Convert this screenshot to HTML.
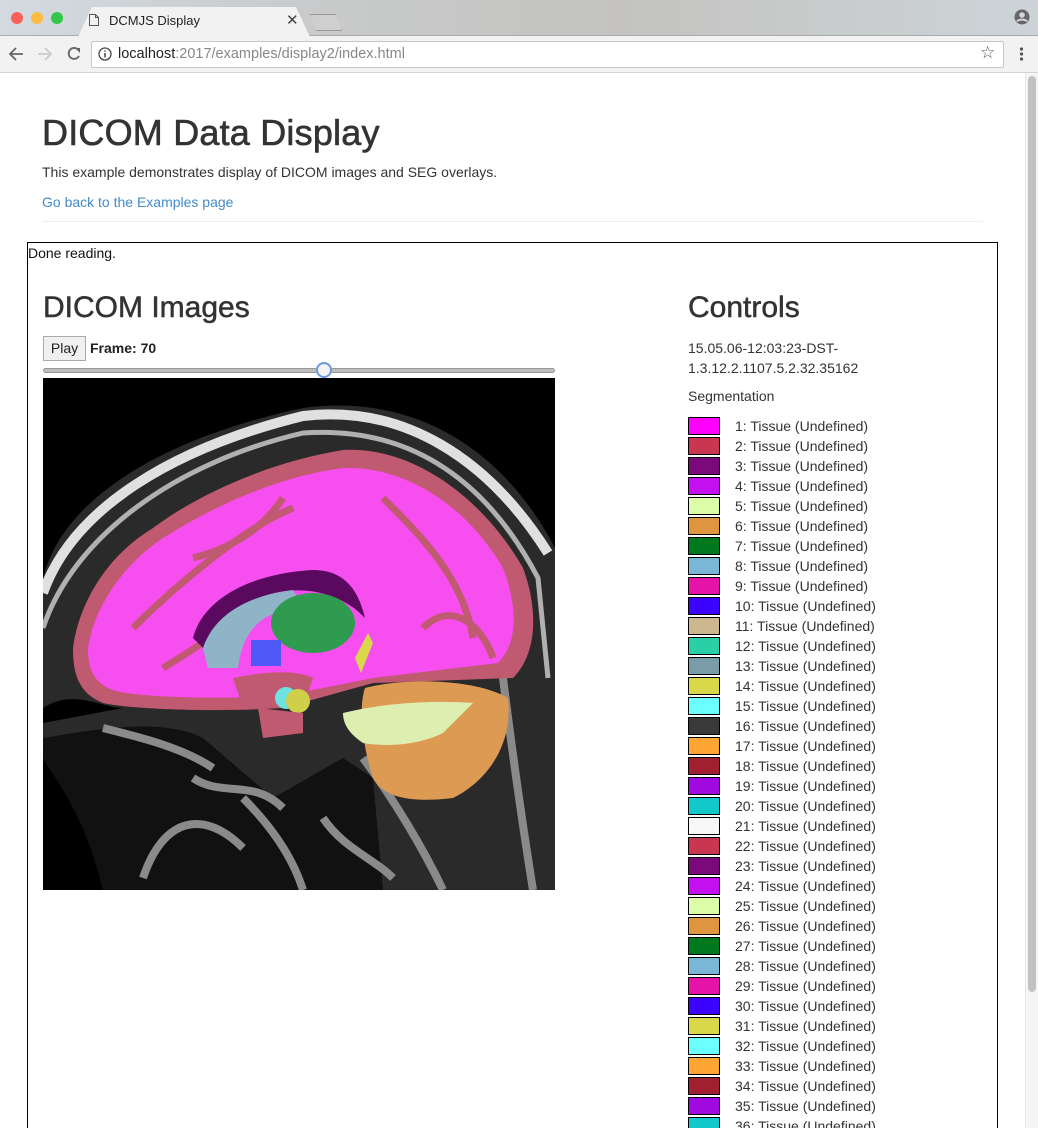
<!DOCTYPE html>
<html><head><meta charset="utf-8"><style>
*{margin:0;padding:0;box-sizing:border-box}
html,body{width:1038px;height:1128px;overflow:hidden}
body{background:#fff;font-family:"Liberation Sans",Arial,sans-serif;color:#333;position:relative}
.abs{position:absolute}
.tabbar{left:0;top:0;width:1038px;height:36px;background:linear-gradient(90deg,#d3dbe0,#c8cacb 30%,#c4c3c0 60%,#cdd4d8);border-bottom:1px solid #a9abad}
.toolbar{left:0;top:36px;width:1038px;height:37px;background:#f2f2f2;border-bottom:1px solid #d4d4d4}
.dot{width:12px;height:12px;border-radius:50%;top:12px}
.tab{left:78px;top:7px;width:232px;height:30px;background:#f2f2f2;clip-path:polygon(0 100%,14px 0,218px 0,232px 100%)}
.url{left:91px;top:41px;width:913px;height:27px;background:#fff;border:1px solid #c7c7c7;border-radius:2px;font-size:14.5px;line-height:25px;padding-left:26px;color:#888}
.sw{left:688px;width:32px;height:18px;border:1px solid #000}
.lb{left:735px;font-size:14px;color:#333}
h{font-weight:normal;-webkit-text-stroke:0.5px #333}
</style></head><body>
<div class="abs tabbar"></div>
<div class="abs dot" style="left:11px;background:#fc605b"></div>
<div class="abs dot" style="left:31px;background:#fdbc40"></div>
<div class="abs dot" style="left:51px;background:#34c84a"></div>
<div class="abs tab"></div>
<svg class="abs" style="left:88px;top:13px" width="12" height="14"><path d="M1.5 1.5h6l3 3v8h-9z M7.5 1.5v3h3" fill="none" stroke="#555" stroke-width="1"/></svg>
<div class="abs" style="left:109px;top:13px;font-size:13px;color:#222">DCMJS Display</div>
<div class="abs" style="left:286px;top:11px;font-size:15px;color:#444">✕</div>
<div class="abs" style="left:310px;top:14px;width:32px;height:17px;background:#cfcfcf;border:1px solid #999;clip-path:polygon(0 0,80% 0,100% 100%,20% 100%)"></div>
<svg class="abs" style="left:1014px;top:9px" width="16" height="16"><circle cx="8" cy="8" r="7.5" fill="#666"/><circle cx="8" cy="6" r="2.8" fill="#d0d6da"/><path d="M3 12.5c1.5-2.5 8.5-2.5 10 0" stroke="#d0d6da" stroke-width="2" fill="none"/></svg>
<div class="abs toolbar"></div>
<svg class="abs" style="left:8px;top:46px" width="80" height="16"><path d="M2 8h13M8 2L2 8l6 6" stroke="#666" stroke-width="1.8" fill="none"/><path d="M30 8h13M37 2l6 6-6 6" stroke="#ccc" stroke-width="1.8" fill="none"/><path d="M70 3.5A5.5 5.5 0 1 0 71 10" stroke="#666" stroke-width="1.8" fill="none"/><path d="M67 2h5v5z" fill="#666"/></svg>
<div class="abs url"><span style="color:#222">localhost</span>:2017/examples/display2/index.html</div>
<svg class="abs" style="left:98px;top:47px" width="14" height="14"><circle cx="7" cy="7" r="6" fill="none" stroke="#444" stroke-width="1.3"/><path d="M7 6v4.5M7 3.5v1.3" stroke="#444" stroke-width="1.5"/></svg>
<div class="abs" style="left:980px;top:43px;font-size:17px;color:#555">☆</div>
<svg class="abs" style="left:1019px;top:46px" width="5" height="16"><circle cx="2.5" cy="3" r="1.6" fill="#555"/><circle cx="2.5" cy="8" r="1.6" fill="#555"/><circle cx="2.5" cy="13" r="1.6" fill="#555"/></svg>
<div class="abs" style="left:1025px;top:73px;width:13px;height:1055px;background:#f5f5f5;border-left:1px solid #e6e6e6"></div>
<div class="abs" style="left:1028px;top:76px;width:8px;height:916px;background:#c2c2c2;border-radius:4px"></div>

<div class="abs" style="left:42px;top:112px;font-size:36px;color:#333;-webkit-text-stroke:0.6px #333;letter-spacing:0.2px">DICOM Data Display</div>
<div class="abs" style="left:42px;top:164px;font-size:14px">This example demonstrates display of DICOM images and SEG overlays.</div>
<div class="abs" style="left:42px;top:194px;font-size:14px;color:#428bca">Go back to the Examples page</div>
<div class="abs" style="left:42px;top:221px;width:941px;height:1px;background:#eee"></div>

<div class="abs" style="left:27px;top:242px;width:971px;height:950px;border:1px solid #000"></div>
<div class="abs" style="left:28px;top:245px;font-size:14px;color:#111">Done reading.</div>
<div class="abs" style="left:43px;top:291px;font-size:30px;color:#333;-webkit-text-stroke:0.5px #333">DICOM Images</div>
<div class="abs" style="left:43px;top:336px;width:43px;height:25px;border:1px solid #aaa;background:#f0f0f0;font-size:14px;line-height:23px;text-align:center;color:#222">Play</div>
<div class="abs" style="left:90px;top:340px;font-size:14px;font-weight:bold;color:#222">Frame: 70</div>
<div class="abs" style="left:43px;top:368px;width:512px;height:5px;background:#bdbdbd;border:1px solid #999;border-radius:3px"></div>
<div class="abs" style="left:316px;top:362px;width:16px;height:16px;border-radius:50%;background:#f4f4f4;border:2px solid #6a9ae0"></div>

<svg class="abs" style="left:43px;top:378px" width="512" height="512" viewBox="0 0 512 512">
<rect width="512" height="512" fill="#000"/>
<path d="M0 200 C20 120 120 60 260 30 C370 15 460 70 512 170 L512 512 L60 512 C40 420 0 370 0 360Z" fill="#2a2a2a"/>
<path d="M0 215 C30 130 130 70 260 38 C360 26 445 80 505 175" stroke="#e0e0e0" stroke-width="10" fill="none"/>
<path d="M0 250 C30 160 130 85 260 55 C360 48 440 95 495 200 L505 300" stroke="#b0b0b0" stroke-width="5" fill="none"/>
<path d="M0 330 C30 310 60 330 80 330 L0 345Z" fill="#000"/>
<path d="M0 360 C60 350 120 340 160 360 L230 420 L300 380 L330 400 L340 512 L60 512 C40 430 10 400 0 380Z" fill="#111"/>
<path d="M100 500 C120 440 160 430 200 470 M60 350 C100 360 140 370 170 390 M200 420 C230 450 250 480 260 512 M320 380 C350 420 380 470 400 512 M460 300 C470 380 480 450 490 512 M150 400 C180 420 210 400 240 430 M280 440 C300 470 330 480 350 500" stroke="#8a8a8a" stroke-width="8" fill="none"/>
<path d="M30 270 C35 230 60 180 110 150 C150 120 220 85 300 72 C370 68 440 120 480 190 C495 230 495 275 470 300 L330 305 L240 330 C160 335 80 330 60 325 C35 315 30 295 30 270Z" fill="#c05a70"/>
<path d="M45 270 C50 235 75 190 120 160 C160 135 225 100 300 90 C365 88 425 130 460 190 C475 230 475 265 455 285 L330 300 L240 318 C160 322 85 318 70 312 C50 305 45 290 45 270Z" fill="#f74ef0"/>
<path d="M90 250 C130 210 200 150 250 130 M120 290 C170 260 190 240 230 230 M340 120 C380 160 420 200 430 260 M380 250 C410 220 440 250 450 280 M150 180 C190 170 220 150 240 120" stroke="#c05a70" stroke-width="7" fill="none"/>
<path d="M150 260 C160 220 210 195 270 192 C300 192 315 210 322 240 C290 205 230 205 200 230 C180 250 175 265 170 280Z" fill="#5a0a5e"/>
<path d="M160 270 C170 240 200 218 250 212 L260 230 C220 232 200 250 195 290 L165 290Z" fill="#8fb4c8"/>
<ellipse cx="270" cy="245" rx="42" ry="30" fill="#2f9b4e"/>
<rect x="208" y="262" width="30" height="26" fill="#4f57f5"/>
<path d="M190 300 C215 295 250 290 270 300 L260 330 L200 330Z" fill="#c05a70"/>
<circle cx="243" cy="320" r="11" fill="#6ce3e0"/><circle cx="255" cy="323" r="12" fill="#cfcf4a"/>
<path d="M215 330 L260 335 L260 355 L220 360Z" fill="#c05a70"/>
<path d="M312 280 L325 255 L330 265 L318 295Z" fill="#d8d84a"/>
<path d="M322 310 C360 300 430 300 465 320 C470 360 450 400 410 420 C370 425 340 420 330 400 C320 370 315 330 322 310Z" fill="#dd9a52"/>
<path d="M300 335 C340 325 390 322 430 325 L400 355 C380 365 350 370 320 365 C305 355 300 345 300 335Z" fill="#dceeb0"/>
</svg>

<div class="abs" style="left:688px;top:291px;font-size:30px;color:#333;-webkit-text-stroke:0.5px #333">Controls</div>
<div class="abs" style="left:688px;top:338px;font-size:14px;line-height:20px">15.05.06-12:03:23-DST-<br>1.3.12.2.1107.5.2.32.35162</div>
<div class="abs" style="left:688px;top:388px;font-size:14px">Segmentation</div>

<div class="abs sw" style="top:417px;background:#f0f"></div><div class="abs lb" style="top:418px">1: Tissue (Undefined)</div>
<div class="abs sw" style="top:437px;background:#c8364f"></div><div class="abs lb" style="top:438px">2: Tissue (Undefined)</div>
<div class="abs sw" style="top:457px;background:#7a0a7a"></div><div class="abs lb" style="top:458px">3: Tissue (Undefined)</div>
<div class="abs sw" style="top:477px;background:#c40fef"></div><div class="abs lb" style="top:478px">4: Tissue (Undefined)</div>
<div class="abs sw" style="top:497px;background:#ddfcaa"></div><div class="abs lb" style="top:498px">5: Tissue (Undefined)</div>
<div class="abs sw" style="top:517px;background:#e09540"></div><div class="abs lb" style="top:518px">6: Tissue (Undefined)</div>
<div class="abs sw" style="top:537px;background:#00781e"></div><div class="abs lb" style="top:538px">7: Tissue (Undefined)</div>
<div class="abs sw" style="top:557px;background:#7ab6d6"></div><div class="abs lb" style="top:558px">8: Tissue (Undefined)</div>
<div class="abs sw" style="top:577px;background:#e613a8"></div><div class="abs lb" style="top:578px">9: Tissue (Undefined)</div>
<div class="abs sw" style="top:597px;background:#3a04ff"></div><div class="abs lb" style="top:598px">10: Tissue (Undefined)</div>
<div class="abs sw" style="top:617px;background:#ccb790"></div><div class="abs lb" style="top:618px">11: Tissue (Undefined)</div>
<div class="abs sw" style="top:637px;background:#2bcfa5"></div><div class="abs lb" style="top:638px">12: Tissue (Undefined)</div>
<div class="abs sw" style="top:657px;background:#7a9ba8"></div><div class="abs lb" style="top:658px">13: Tissue (Undefined)</div>
<div class="abs sw" style="top:677px;background:#d8d84a"></div><div class="abs lb" style="top:678px">14: Tissue (Undefined)</div>
<div class="abs sw" style="top:697px;background:#6bffff"></div><div class="abs lb" style="top:698px">15: Tissue (Undefined)</div>
<div class="abs sw" style="top:717px;background:#3a3a3a"></div><div class="abs lb" style="top:718px">16: Tissue (Undefined)</div>
<div class="abs sw" style="top:737px;background:#ffa533"></div><div class="abs lb" style="top:738px">17: Tissue (Undefined)</div>
<div class="abs sw" style="top:757px;background:#a02030"></div><div class="abs lb" style="top:758px">18: Tissue (Undefined)</div>
<div class="abs sw" style="top:777px;background:#a00ae0"></div><div class="abs lb" style="top:778px">19: Tissue (Undefined)</div>
<div class="abs sw" style="top:797px;background:#12c8c8"></div><div class="abs lb" style="top:798px">20: Tissue (Undefined)</div>
<div class="abs sw" style="top:817px;background:#f8f8f8"></div><div class="abs lb" style="top:818px">21: Tissue (Undefined)</div>
<div class="abs sw" style="top:837px;background:#c8364f"></div><div class="abs lb" style="top:838px">22: Tissue (Undefined)</div>
<div class="abs sw" style="top:857px;background:#7a0a7a"></div><div class="abs lb" style="top:858px">23: Tissue (Undefined)</div>
<div class="abs sw" style="top:877px;background:#c40fef"></div><div class="abs lb" style="top:878px">24: Tissue (Undefined)</div>
<div class="abs sw" style="top:897px;background:#ddfcaa"></div><div class="abs lb" style="top:898px">25: Tissue (Undefined)</div>
<div class="abs sw" style="top:917px;background:#e09540"></div><div class="abs lb" style="top:918px">26: Tissue (Undefined)</div>
<div class="abs sw" style="top:937px;background:#00781e"></div><div class="abs lb" style="top:938px">27: Tissue (Undefined)</div>
<div class="abs sw" style="top:957px;background:#7ab6d6"></div><div class="abs lb" style="top:958px">28: Tissue (Undefined)</div>
<div class="abs sw" style="top:977px;background:#e613a8"></div><div class="abs lb" style="top:978px">29: Tissue (Undefined)</div>
<div class="abs sw" style="top:997px;background:#3a04ff"></div><div class="abs lb" style="top:998px">30: Tissue (Undefined)</div>
<div class="abs sw" style="top:1017px;background:#d8d84a"></div><div class="abs lb" style="top:1018px">31: Tissue (Undefined)</div>
<div class="abs sw" style="top:1037px;background:#6bffff"></div><div class="abs lb" style="top:1038px">32: Tissue (Undefined)</div>
<div class="abs sw" style="top:1057px;background:#ffa533"></div><div class="abs lb" style="top:1058px">33: Tissue (Undefined)</div>
<div class="abs sw" style="top:1077px;background:#a02030"></div><div class="abs lb" style="top:1078px">34: Tissue (Undefined)</div>
<div class="abs sw" style="top:1097px;background:#a00ae0"></div><div class="abs lb" style="top:1098px">35: Tissue (Undefined)</div>
<div class="abs sw" style="top:1117px;background:#12c8c8"></div><div class="abs lb" style="top:1118px">36: Tissue (Undefined)</div>
</body></html>
